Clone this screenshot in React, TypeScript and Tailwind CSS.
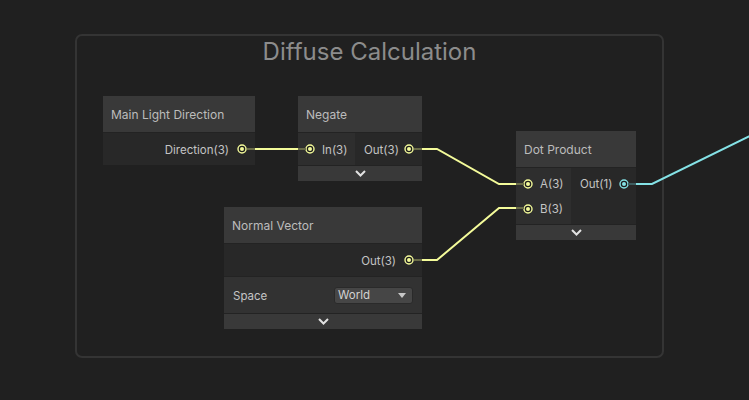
import React from "react";

const YELLOW = "#f4fb9a";
const CYAN = "#84e2e6";

type PortProps = { color: string };

function Port({ color }: PortProps) {
  return (
    <svg width="10" height="10" viewBox="0 0 10 10" className="shrink-0">
      <circle cx="5" cy="5" r="4" fill="#1e1e1e" stroke={color} strokeWidth="1.4" />
      <circle cx="5" cy="5" r="2" fill={color} />
    </svg>
  );
}

function Label({ children }: { children: React.ReactNode }) {
  return <span className="pt-[3px]">{children}</span>;
}

function Chevron() {
  return (
    <div className="h-[16px] bg-[#393939] border-t border-[#232323] flex items-center justify-center">
      <svg width="11" height="7" viewBox="0 0 11 7">
        <path d="M1 1 L5.5 5.5 L10 1" fill="none" stroke="#e2e2e2" strokeWidth="2" />
      </svg>
    </div>
  );
}

function Header({ title }: { title: string }) {
  return (
    <div className="h-[37px] bg-[#393939] border-b border-[#232323] flex items-center px-2 pt-[2px] text-[12px] text-[#bcbcbc]">
      {title}
    </div>
  );
}

// wires between the nodes, drawn over the canvas
function Wires() {
  return (
    <svg className="absolute inset-0 pointer-events-none" width="749" height="400">
      <g fill="none" strokeWidth="2">
        {/* Main Light Direction -> Negate.In */}
        <line x1="247" y1="149" x2="255" y2="149" stroke="#6a6c48" />
        <line x1="255" y1="149" x2="298" y2="149" stroke={YELLOW} />
        <line x1="298" y1="149" x2="306" y2="149" stroke="#6a6c48" />
        {/* Negate.Out -> Dot Product.A */}
        <line x1="414" y1="149" x2="422" y2="149" stroke="#6a6c48" />
        <polyline points="422,149 437,149 499,184 516,184" stroke={YELLOW} />
        <line x1="516" y1="184" x2="524" y2="184" stroke="#6a6c48" />
        {/* Normal Vector.Out -> Dot Product.B */}
        <line x1="414" y1="260" x2="422" y2="260" stroke="#6a6c48" />
        <polyline points="422,260 437,260 499,208 516,208" stroke={YELLOW} />
        <line x1="516" y1="208" x2="524" y2="208" stroke="#6a6c48" />
        {/* Dot Product.Out -> off canvas */}
        <line x1="628" y1="184" x2="636" y2="184" stroke="#3d5d60" />
        <polyline points="636,184 652,184 760,131" stroke={CYAN} />
      </g>
    </svg>
  );
}

export default function App() {
  return (
    <div
      className="relative w-[749px] h-[400px] overflow-hidden bg-[#202020]"
      style={{ fontFamily: "Inter, 'Noto Sans', sans-serif" }}
    >
      {/* group frame */}
      <div className="absolute left-[75px] top-[34px] w-[589px] h-[324px] rounded-[7px] border-2 border-[#343434]">
        <div className="text-center text-[24px] text-[#8c8c8c] -mt-[2px]">Diffuse Calculation</div>
      </div>

      {/* Main Light Direction */}
      <div className="absolute left-[103px] top-[96px] w-[152px] flex flex-col">
        <Header title="Main Light Direction" />
        <div className="h-[32px] bg-[#282828] flex items-center justify-end gap-[8px] pr-[8px] text-[11.5px] text-[#c4c4c4]">
          <Label>Direction(3)</Label>
          <Port color={YELLOW} />
        </div>
      </div>

      {/* Negate */}
      <div className="absolute left-[298px] top-[96px] w-[124px] flex flex-col">
        <Header title="Negate" />
        <div className="h-[32px] flex text-[11.5px] text-[#c4c4c4]">
          <div className="w-[57px] bg-[#2e2e2e] flex items-center gap-[7px] pl-[7px]">
            <Port color={YELLOW} />
            <Label>In(3)</Label>
          </div>
          <div className="flex-1 bg-[#282828] flex items-center justify-between pl-[9px] pr-[8px]">
            <Label>Out(3)</Label>
            <Port color={YELLOW} />
          </div>
        </div>
        <Chevron />
      </div>

      {/* Dot Product */}
      <div className="absolute left-[516px] top-[131px] w-[120px] flex flex-col">
        <Header title="Dot Product" />
        <div className="h-[56px] flex text-[11.5px] text-[#c4c4c4]">
          <div className="w-[55px] bg-[#2e2e2e] flex flex-col py-[3px]">
            <div className="h-[25px] flex items-center gap-[7px] pl-[7px]">
              <Port color={YELLOW} />
              <Label>A(3)</Label>
            </div>
            <div className="h-[25px] flex items-center gap-[7px] pl-[7px]">
              <Port color={YELLOW} />
              <Label>B(3)</Label>
            </div>
          </div>
          <div className="flex-1 bg-[#282828] flex flex-col py-[3px]">
            <div className="h-[25px] flex items-center justify-between pl-[9px] pr-[7px]">
              <Label>Out(1)</Label>
              <Port color={CYAN} />
            </div>
          </div>
        </div>
        <Chevron />
      </div>

      {/* Normal Vector */}
      <div className="absolute left-[224px] top-[207px] w-[198px] flex flex-col">
        <Header title="Normal Vector" />
        <div className="h-[32px] bg-[#282828] flex items-center justify-end gap-[8px] pr-[8px] text-[11.5px] text-[#c4c4c4]">
          <Label>Out(3)</Label>
          <Port color={YELLOW} />
        </div>
        <div className="h-[37px] bg-[#323232] border-t border-[#232323] flex items-center justify-between pl-[9px] pr-[9px] text-[11.5px] text-[#c4c4c4]">
          <Label>Space</Label>
          <div className="w-[79px] h-[17px] rounded-[3px] bg-[#464646] border border-[#2a2a2a] flex items-center justify-between pl-[3px] pr-[6px] text-[#d2d2d2]">
            <span className="pt-[1px]">World</span>
            <svg width="8" height="5" viewBox="0 0 8 5">
              <path d="M0 0 L8 0 L4 5 Z" fill="#c8c8c8" />
            </svg>
          </div>
        </div>
        <Chevron />
      </div>

      <Wires />
    </div>
  );
}
